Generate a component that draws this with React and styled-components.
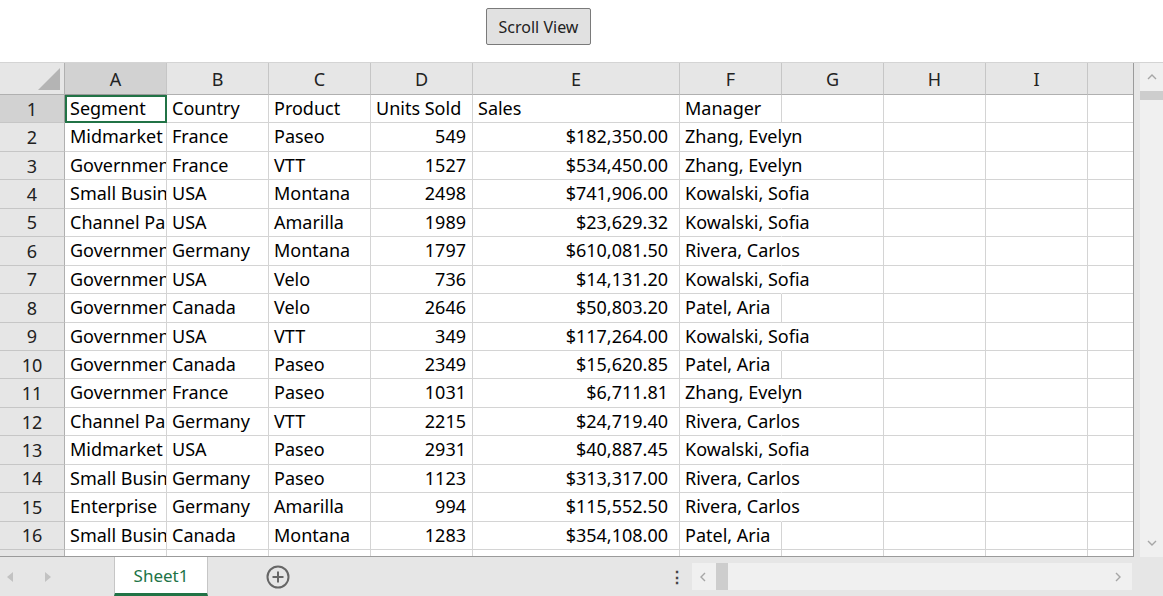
import React from 'react';
import styled, { createGlobalStyle } from 'styled-components';

const Global = createGlobalStyle`
  html, body { margin: 0; padding: 0; background: #fff; }
  body { font-family: "Noto Sans", "Open Sans", sans-serif; overflow: hidden; }
`;

const Page = styled.div`
  width: 1163px;
  height: 596px;
  display: flex;
  flex-direction: column;
  overflow: hidden;
`;

const Top = styled.div`
  height: 63px;
  display: flex;
  justify-content: flex-start;
  align-items: flex-start;
  padding: 8px 0 0 486px;
  box-sizing: border-box;
  border-bottom: 1px solid #d4d4d4;
`;

const Button = styled.button`
  height: 37px;
  width: 105px;
  padding: 0;
  font-family: "Noto Sans", sans-serif;
  font-size: 16px;
  color: #222;
  background: #e1e1e1;
  border: 1px solid #7a7a7a;
  border-radius: 2px;
`;

const Body = styled.div`
  flex: 1;
  display: flex;
  background: #e6e6e6;
  min-height: 0;
`;

const Sheet = styled.div`
  width: 1134px;
  overflow: hidden;
  background: #fff;
  border-right: 1px solid #9b9b9b;
  border-bottom: 1px solid #9b9b9b;
  box-sizing: border-box;
  height: 494px;
`;

const Row = styled.div`
  display: flex;
  height: ${p => (p.$head ? 32 : 28.45)}px;
`;

const Corner = styled.div`
  width: 65px;
  flex-shrink: 0;
  background: #e6e6e6;
  border-right: 1px solid #b0b0b0;
  border-bottom: 1px solid #b0b0b0;
  box-sizing: border-box;
  position: relative;
  &::after {
    content: '';
    position: absolute;
    right: 4px;
    bottom: 4px;
    border-left: 22px solid transparent;
    border-bottom: 22px solid #b4b4b4;
  }
`;

const ColHead = styled.div`
  width: ${p => p.$w}px;
  flex-shrink: 0;
  background: ${p => (p.$sel ? '#d2d2d2' : '#e6e6e6')};
  border-right: 1px solid #c6c6c6;
  border-bottom: 1px solid ${p => (p.$sel ? '#9b9b9b' : '#b0b0b0')};
  box-sizing: border-box;
  display: flex;
  align-items: center;
  justify-content: center;
  font-size: 18px;
  color: #222;
`;

const RowHead = styled.div`
  width: 65px;
  flex-shrink: 0;
  background: ${p => (p.$sel ? '#d2d2d2' : '#e6e6e6')};
  border-right: 1px solid ${p => (p.$sel ? '#9b9b9b' : '#b0b0b0')};
  border-bottom: 1px solid #c6c6c6;
  box-sizing: border-box;
  display: flex;
  align-items: center;
  justify-content: center;
  font-size: 18px;
  color: #222;
`;

const Cell = styled.div`
  width: ${p => p.$w}px;
  flex-shrink: 0;
  box-sizing: border-box;
  border-right: 1px solid ${p => (p.$noRight ? 'transparent' : '#d4d4d4')};
  border-bottom: 1px solid #d4d4d4;
  padding: 0 ${p => p.$pr || 5}px 0 5px;
  font-size: 18px;
  color: #000;
  white-space: nowrap;
  overflow: ${p => (p.$spill ? 'visible' : 'hidden')};
  text-overflow: clip;
  text-align: ${p => (p.$right ? 'right' : 'left')};
  line-height: 27px;
  outline: ${p => (p.$active ? '2px solid #217346' : 'none')};
  outline-offset: -2px;
`;

const VScroll = styled.div`
  width: 23px;
  margin-left: 6px;
  background: #f0f0f0;
  display: flex;
  flex-direction: column;
  align-items: center;
  height: 494px;
`;

const Arrow = styled.div`
  height: 28px;
  width: ${p => p.$w || 23}px;
  display: flex;
  align-items: center;
  justify-content: center;
  color: #a6a6a6;
`;

const VThumb = styled.div`
  width: 100%;
  height: 9px;
  background: #cdcdcd;
`;

const Spacer = styled.div`
  flex: 1;
`;

const Tabs = styled.div`
  height: 39px;
  background: #e6e6e6;
  display: flex;
  align-items: stretch;
`;

const NavArrows = styled.div`
  width: 114px;
  display: flex;
  align-items: center;
  gap: 30px;
  padding-left: 6px;
  box-sizing: border-box;
  color: #c2c2c2;
`;

const Tab = styled.div`
  width: 94px;
  background: #fff;
  color: #217346;
  font-size: 17px;
  display: flex;
  align-items: center;
  justify-content: center;
  border-bottom: 3px solid #217346;
  border-left: 1px solid #c6c6c6;
  border-right: 1px solid #c6c6c6;
  box-sizing: border-box;
`;

const AddBtn = styled.div`
  width: 140px;
  display: flex;
  align-items: center;
  justify-content: center;
`;

const Dots = styled.div`
  margin-left: 318px;
  width: 22px;
  display: flex;
  align-items: center;
  justify-content: center;
  color: #444;
  font-size: 16px;
  font-weight: bold;
`;

const HScroll = styled.div`
  width: 440px;
  margin: 6px 0 6px 4px;
  background: #f0f0f0;
  display: flex;
  align-items: center;
  color: #a6a6a6;
`;

const HThumb = styled.div`
  width: 12px;
  height: 100%;
  background: #cdcdcd;
  margin-left: 2px;
`;

const cols = [
  { n: 'A', w: 102 }, { n: 'B', w: 102 }, { n: 'C', w: 102 }, { n: 'D', w: 102 },
  { n: 'E', w: 207 }, { n: 'F', w: 102 }, { n: 'G', w: 102 }, { n: 'H', w: 102 },
  { n: 'I', w: 102 }, { n: '', w: 102 },
];

const data = [
  ['Segment', 'Country', 'Product', 'Units Sold', 'Sales', 'Manager'],
  ['Midmarket', 'France', 'Paseo', '549', '$182,350.00', 'Zhang, Evelyn'],
  ['Government', 'France', 'VTT', '1527', '$534,450.00', 'Zhang, Evelyn'],
  ['Small Business', 'USA', 'Montana', '2498', '$741,906.00', 'Kowalski, Sofia'],
  ['Channel Partners', 'USA', 'Amarilla', '1989', '$23,629.32', 'Kowalski, Sofia'],
  ['Government', 'Germany', 'Montana', '1797', '$610,081.50', 'Rivera, Carlos'],
  ['Government', 'USA', 'Velo', '736', '$14,131.20', 'Kowalski, Sofia'],
  ['Government', 'Canada', 'Velo', '2646', '$50,803.20', 'Patel, Aria'],
  ['Government', 'USA', 'VTT', '349', '$117,264.00', 'Kowalski, Sofia'],
  ['Government', 'Canada', 'Paseo', '2349', '$15,620.85', 'Patel, Aria'],
  ['Government', 'France', 'Paseo', '1031', '$6,711.81', 'Zhang, Evelyn'],
  ['Channel Partners', 'Germany', 'VTT', '2215', '$24,719.40', 'Rivera, Carlos'],
  ['Midmarket', 'USA', 'Paseo', '2931', '$40,887.45', 'Kowalski, Sofia'],
  ['Small Business', 'Germany', 'Paseo', '1123', '$313,317.00', 'Rivera, Carlos'],
  ['Enterprise', 'Germany', 'Amarilla', '994', '$115,552.50', 'Rivera, Carlos'],
  ['Small Business', 'Canada', 'Montana', '1283', '$354,108.00', 'Patel, Aria'],
  ['', '', '', '', '', ''],
];

const Chevron = ({ d }) => (
  <svg width="12" height="12" viewBox="0 0 12 12" fill="none" stroke="currentColor" strokeWidth="1.4">
    <path d={d} />
  </svg>
);

export default function App() {
  return (
    <Page>
      <Global />
      <Top>
        <Button>Scroll View</Button>
      </Top>
      <Body>
        <Sheet>
          <Row $head>
            <Corner />
            {cols.map((c, i) => (
              <ColHead key={i} $w={c.w} $sel={i === 0}>{c.n}</ColHead>
            ))}
          </Row>
          {data.map((r, ri) => (
            <Row key={ri}>
              <RowHead $sel={ri === 0}>{ri + 1}</RowHead>
              {cols.map((c, ci) => {
                const v = r[ci] || '';
                const spill = ci === 5 && ri > 0 && v.length > 11;
                const num = ri > 0 && (ci === 3 || ci === 4);
                return (
                  <Cell
                    key={ci}
                    $w={c.w}
                    $right={num}
                    $pr={ci === 4 ? 11 : 6}
                    $spill={spill}
                    $noRight={spill}
                    $active={ri === 0 && ci === 0}
                  >
                    {v}
                  </Cell>
                );
              })}
            </Row>
          ))}
        </Sheet>
        <VScroll>
          <Arrow><Chevron d="M2 8 L6 4 L10 8" /></Arrow>
          <VThumb />
          <Spacer />
          <Arrow><Chevron d="M2 4 L6 8 L10 4" /></Arrow>
        </VScroll>
      </Body>
      <Tabs>
        <NavArrows>
          <svg width="8" height="10" viewBox="0 0 8 10"><path d="M7 0 L1 5 L7 10 Z" fill="currentColor" /></svg>
          <svg width="8" height="10" viewBox="0 0 8 10"><path d="M1 0 L7 5 L1 10 Z" fill="currentColor" /></svg>
        </NavArrows>
        <Tab>Sheet1</Tab>
        <AddBtn>
          <svg width="24" height="24" viewBox="0 0 24 24" fill="none" stroke="#666" strokeWidth="2">
            <circle cx="12" cy="12" r="10.5" />
            <path d="M12 6.5 V17.5 M6.5 12 H17.5" />
          </svg>
        </AddBtn>
        <Dots>⋮</Dots>
        <HScroll>
          <Arrow $w={22}><Chevron d="M8 2 L4 6 L8 10" /></Arrow>
          <HThumb />
          <Spacer />
          <Arrow $w={28}><Chevron d="M4 2 L8 6 L4 10" /></Arrow>
        </HScroll>
      </Tabs>
    </Page>
  );
}
